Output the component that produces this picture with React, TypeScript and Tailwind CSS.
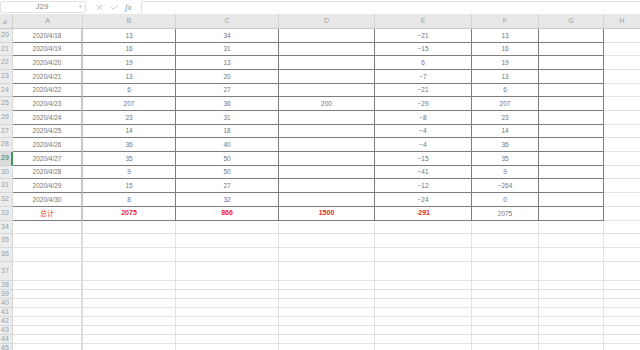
import { X, Check } from "lucide-react";

// column widths, A..G, H fills the rest
const colW = ["w-[70px]", "w-[93px]", "w-[103px]", "w-[96px]", "w-[97px]", "w-[67px]", "w-[65px]"];
const letters = ["A", "B", "C", "D", "E", "F", "G"];

const rows: { n: number; h: string; v: string[] }[] = [
  { n: 20, h: "h-[14px]", v: ["2020/4/18", "13", "34", "", "−21", "13"] },
  { n: 21, h: "h-[13px]", v: ["2020/4/19", "16", "31", "", "−15", "16"] },
  { n: 22, h: "h-[14px]", v: ["2020/4/20", "19", "13", "", "6", "19"] },
  { n: 23, h: "h-[14px]", v: ["2020/4/21", "13", "20", "", "−7", "13"] },
  { n: 24, h: "h-[13px]", v: ["2020/4/22", "6", "27", "", "−21", "6"] },
  { n: 25, h: "h-[14px]", v: ["2020/4/23", "207", "36", "200", "−29", "207"] },
  { n: 26, h: "h-[14px]", v: ["2020/4/24", "23", "31", "", "−8", "23"] },
  { n: 27, h: "h-[13px]", v: ["2020/4/25", "14", "18", "", "−4", "14"] },
  { n: 28, h: "h-[14px]", v: ["2020/4/26", "36", "40", "", "−4", "36"] },
  { n: 29, h: "h-[14px]", v: ["2020/4/27", "35", "50", "", "−15", "35"] },
  { n: 30, h: "h-[13px]", v: ["2020/4/28", "9", "50", "", "−41", "9"] },
  { n: 31, h: "h-[14px]", v: ["2020/4/29", "15", "27", "", "−12", "−264"] },
  { n: 32, h: "h-[14px]", v: ["2020/4/30", "8", "32", "", "−24", "0"] },
];

const emptyRows = [
  { n: 34, h: "h-[13px]" },
  { n: 35, h: "h-[14px]" },
  { n: 36, h: "h-[14px]" },
  { n: 37, h: "h-[19px]" },
  { n: 38, h: "h-[9px]" },
  { n: 39, h: "h-[9px]" },
  { n: 40, h: "h-[9px]" },
  { n: 41, h: "h-[9px]" },
  { n: 42, h: "h-[9px]" },
  { n: 43, h: "h-[9px]" },
  { n: 44, h: "h-[9px]" },
  { n: 45, h: "h-[9px]" },
];

function RowNum({ n, active }: { n: number; active?: boolean }) {
  return (
    <div
      className={
        active
          ? "w-[13px] shrink-0 bg-[#dcdcdc] border-b border-b-[#d0d0d0] border-r-2 border-r-[#3c9a5a] text-[#3c7a50] text-[7px] pl-[1px] flex items-center"
          : "w-[13px] shrink-0 bg-[#ececec] border-b border-r border-[#d6d6d6] text-[#a0a0a0] text-[7px] pl-[1px] flex items-center"
      }
    >
      {n}
    </div>
  );
}

export default function App() {
  return (
    <div className="w-[640px] h-[350px] overflow-hidden bg-white font-['Liberation_Sans',sans-serif] text-[6.5px] text-[#757575]">
      {/* formula bar */}
      <div className="flex h-[14px] items-center bg-white">
        <div className="w-[86px] h-[12px] border border-[#e2e2e2] rounded-[2px] flex items-center">
          <span className="flex-1 text-center text-[8px] text-[#8a8a8a] pl-[4px]">J29</span>
          <span className="w-[6px] text-[5px] text-[#bbb]">▾</span>
        </div>
        <div className="flex items-center gap-[6px] pl-[9px] w-[55px] text-[#8a8a8a]">
          <X size={9} strokeWidth={1.3} />
          <Check size={9} strokeWidth={1.3} />
          <span className="font-['Liberation_Serif',serif] italic text-[9px] leading-none">fx</span>
        </div>
        <div className="flex-1 h-[13px] border-l border-t border-[#e2e2e2] rounded-tl-[3px]" />
      </div>

      {/* column headers */}
      <div className="flex h-[15px] bg-[#e8e8e8] border-b border-[#c8c8c8] text-[7px] text-[#a0a0a0]">
        <div className="w-[13px] shrink-0 border-r border-[#d0d0d0] flex items-end justify-start pl-[2px] pb-[2px] text-[6px] text-[#bbb]">◢</div>
        {letters.map((l, i) => (
          <div key={l} className={`${colW[i]} shrink-0 border-r border-[#d4d4d4] flex items-center justify-center`}>
            {l}
          </div>
        ))}
        <div className="flex-1 flex items-center justify-center">H</div>
      </div>

      {/* data */}
      {rows.map((r) => (
        <div key={r.n} className={`flex ${r.h}`}>
          <RowNum n={r.n} active={r.n === 29} />
          {r.v.map((val, i) => (
            <div
              key={i}
              className={
                i === 0
                  ? `${colW[i]} shrink-0 border-b border-b-[#7d7d7d] border-r-2 border-r-[#c8c8c8] flex items-center justify-center`
                  : `${colW[i]} shrink-0 border-b border-r border-[#7d7d7d] flex items-center justify-center`
              }
            >
              {val}
            </div>
          ))}
          <div className="w-[65px] shrink-0 border-b border-r border-[#7d7d7d]" />
          <div className="flex-1 border-b border-[#e2e2e2]" />
        </div>
      ))}

      {/* total row */}
      <div className="flex h-[14px]">
        <RowNum n={33} />
        <div className="w-[70px] shrink-0 border-b border-b-[#7d7d7d] border-r-2 border-r-[#c8c8c8] flex items-center justify-center text-[#e8452c] text-[7px] font-['Noto_Sans_CJK_SC',sans-serif]">
          总计
        </div>
        <div className="w-[93px] shrink-0 border-b border-r border-[#7d7d7d] flex items-center justify-center text-[#ee1c2c] text-[7px] font-bold">2075</div>
        <div className="w-[103px] shrink-0 border-b border-r border-[#7d7d7d] flex items-center justify-center text-[#ee1c2c] text-[7px] font-bold">866</div>
        <div className="w-[96px] shrink-0 border-b border-r border-[#7d7d7d] flex items-center justify-center text-[#ee1c2c] text-[7px] font-bold">1500</div>
        <div className="w-[97px] shrink-0 border-b border-r border-[#7d7d7d] flex items-center justify-center text-[#ee1c2c] text-[7px] font-bold">
          <span className="text-[#f3a36a] font-normal">-</span>291
        </div>
        <div className="w-[67px] shrink-0 border-b border-r border-[#7d7d7d] flex items-center justify-center">2075</div>
        <div className="w-[65px] shrink-0 border-b border-r border-[#7d7d7d]" />
        <div className="flex-1 border-b border-[#e2e2e2]" />
      </div>

      {/* empty rows */}
      {emptyRows.map((r) => (
        <div key={r.n} className={`flex ${r.h}`}>
          <RowNum n={r.n} />
          {colW.map((w, i) => (
            <div
              key={i}
              className={
                i === 0
                  ? `${w} shrink-0 border-b border-b-[#e2e2e2] border-r-2 border-r-[#dcdcdc]`
                  : `${w} shrink-0 border-b border-r border-[#e2e2e2]`
              }
            />
          ))}
          <div className="flex-1 border-b border-[#e2e2e2]" />
        </div>
      ))}
    </div>
  );
}
